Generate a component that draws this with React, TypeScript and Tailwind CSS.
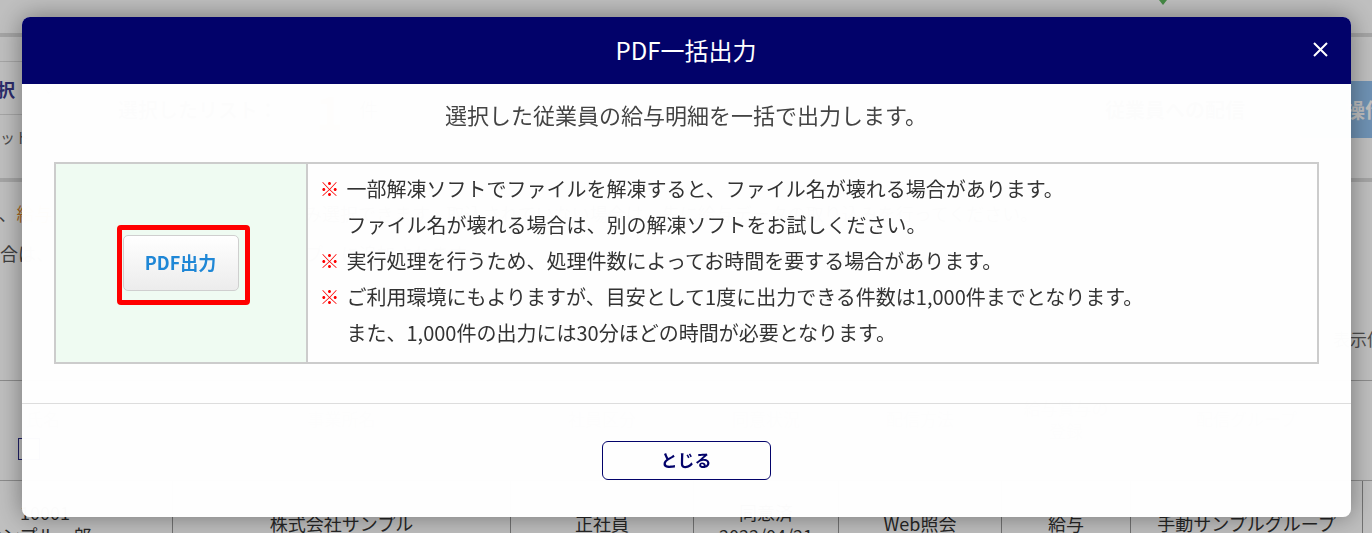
const cols = [
  { w: "w-[172px]", label: ["氏名"], left: true },
  { w: "w-[338px]", label: ["事業所名"] },
  { w: "w-[183px]", label: ["社員区分"] },
  { w: "w-[145px]", label: ["同意状況"] },
  { w: "w-[163px]", label: ["配信方法"] },
  { w: "w-[129px]", label: ["給与賞与の", "登録"] },
  { w: "w-[232px]", label: ["配信グループ"] },
];

const rowCells = [
  ["10001", "サンプル一郎"],
  ["株式会社サンプル"],
  ["正社員"],
  ["同意済", "2022/04/21"],
  ["Web照会"],
  ["給与"],
  ["手動サンプルグループ"],
];

function SortButtons({ active }: { active?: boolean }) {
  return (
    <div className="flex gap-[4px]">
      <span
        className={`w-[22px] h-[22px] border flex items-center justify-center ${
          active ? "border-[#2c2c8c]" : "border-[#dddddd]"
        }`}
      >
        <svg width="12" height="8" viewBox="0 0 12 8">
          <polyline points="1,7 6,2 11,7" fill="none" stroke="#cccccc" strokeWidth="1.6" />
        </svg>
      </span>
      <span className="w-[22px] h-[22px] border border-[#dddddd] flex items-center justify-center">
        <svg width="12" height="8" viewBox="0 0 12 8">
          <polyline points="1,1 6,6 11,1" fill="none" stroke="#cccccc" strokeWidth="1.6" />
        </svg>
      </span>
    </div>
  );
}

// page behind the dialog (dimmed by the overlay)
function BackgroundPage() {
  return (
    <div className="h-[533px] overflow-hidden bg-white text-[#333]">
      <div className="h-[33px] flex justify-end pr-[205px]">
        <div className="w-0 h-0 border-x-[4px] border-x-transparent border-t-[5px] border-t-[#5cb85c]" />
      </div>
      <div className="h-[4px] bg-[#dcdcdc]" />

      <div className="h-[141px] flex">
        <div className="w-[70px] shrink-0 flex flex-col">
          <div className="h-[25px] border-b border-[#dddddd]" />
          <div className="h-[53px] border-b border-[#dddddd] flex items-center gap-[26px] pt-[2px] text-[18px] font-bold text-[#3b3b8f] -ml-[3px]">
            <span>択</span>
            <svg width="16" height="9" viewBox="0 0 16 9">
              <polyline points="1,1 8,8 15,1" fill="none" stroke="#999" strokeWidth="1.6" />
            </svg>
          </div>
          <div className="pt-[14px] text-[15px] leading-[15px] text-[#666] whitespace-nowrap">ット</div>
        </div>
        <div className="flex-1 flex items-center pl-[48px] pt-[4px]">
          <span className="text-[20px] font-bold text-[#777]">選択したリスト：</span>
          <span className="ml-[38px] text-[46px] font-bold leading-none text-[#f0a040]">1</span>
          <span className="ml-[16px] text-[19px] text-[#777]">件</span>
          <div className="flex-1" />
          <div className="w-[186px] h-[54px] border border-[#cccccc] rounded flex items-center justify-center text-[20px] font-bold text-[#555]">
            従業員への配信
          </div>
          <div className="ml-[32px] mr-[-58px] w-[130px] h-[57px] rounded bg-[#94c3f0] flex items-center justify-center text-[20px] font-bold text-white">
            操作
          </div>
        </div>
      </div>
      <div className="h-[4px] bg-[#dcdcdc]" />

      <div className="h-[198px] flex flex-col pt-[11px] text-[18px] leading-[40px] text-[#555] whitespace-nowrap">
        <p className="-ml-[18px]">
          す、<span className="text-[#e08a2c]">給与</span>
          データを取込されている場合のみ選択できます。取込されていない場合は、先に給与データの取り込みを行ってください。
        </p>
        <p>合は、操作を選択すると「配信グループ」に追加されます。</p>
        <div className="flex-1 flex items-end justify-end pb-[30px]">
          <span className="text-[17px] leading-[22px] text-[#666] mr-[-29px]">表示件数</span>
        </div>
      </div>

      <div className="h-[100px] border-t border-[#bbbbbb] flex">
        {cols.map((c, i) => (
          <div
            key={i}
            className={`${c.w} shrink-0 flex flex-col justify-center gap-[8px] pt-[6px] ${
              c.left ? "items-start pl-[18px]" : "items-center border-l border-[#e6e6e6]"
            }`}
          >
            <div className={`text-[17px] leading-[23px] text-[#888] text-center ${c.left ? "pl-[8px]" : ""}`}>
              {c.label.map((l) => (
                <div key={l}>{l}</div>
              ))}
            </div>
            <SortButtons active={i === 0} />
          </div>
        ))}
      </div>

      <div className="h-[86px] border-t border-[#bbbbbb] flex text-[18px] leading-[23px] text-[#333]">
        {rowCells.map((cell, i) => (
          <div
            key={i}
            className={`${cols[i].w} shrink-0 flex flex-col justify-center whitespace-nowrap ${
              i === 0 ? "items-start pl-[20px]" : "items-center border-l border-[#999999]"
            }`}
          >
            {cell.map((t, j) => (
              <div key={j} className={i === 0 && j === 1 ? "-ml-[36px]" : ""}>
                {t}
              </div>
            ))}
          </div>
        ))}
        <div className="flex-1 border-l border-[#999999]" />
      </div>
    </div>
  );
}

const notes: string[][] = [
  [
    "一部解凍ソフトでファイルを解凍すると、ファイル名が壊れる場合があります。",
    "ファイル名が壊れる場合は、別の解凍ソフトをお試しください。",
  ],
  ["実行処理を行うため、処理件数によってお時間を要する場合があります。"],
  [
    "ご利用環境にもよりますが、目安として1度に出力できる件数は1,000件までとなります。",
    "また、1,000件の出力には30分ほどの時間が必要となります。",
  ],
];

function PdfBulkDialog() {
  return (
    <div className="fixed inset-0 bg-black/25 flex items-center justify-center">
      <div className="w-[1329px] h-[500px] rounded-lg bg-white/[0.985] shadow-[0_0_26px_rgba(0,0,0,0.4)] overflow-hidden flex flex-col">
        <div className="h-[67px] shrink-0 bg-[#02026a] relative flex items-center justify-center">
          <h2 className="text-white text-[24px] leading-none">PDF一括出力</h2>
          <button className="absolute right-[23px] top-[25px]">
            <svg width="15" height="15" viewBox="0 0 15 15">
              <path d="M1 1 L14 14 M14 1 L1 14" stroke="white" strokeWidth="2" />
            </svg>
          </button>
        </div>

        <div className="flex-1 flex flex-col">
          <p className="pt-[15px] text-center text-[22px] leading-[30px] text-[#444]">
            選択した従業員の給与明細を一括で出力します。
          </p>
          <div className="mx-[32px] mt-[33px] h-[202px] border-2 border-[#cccccc] flex">
            <div className="w-[252px] shrink-0 bg-[#effbf2] border-r-2 border-[#cccccc] flex items-center justify-center">
              <div className="relative">
                <button className="w-[116px] h-[56px] rounded-[5px] border border-[#cfcfcf] bg-gradient-to-b from-white to-[#ececec] text-[18px] font-bold text-[#1f87d6]">
                  PDF出力
                </button>
                <div className="absolute -left-[6px] -top-[10px] w-[133px] h-[80px] border-[5px] border-[#ff0000] rounded-[4px]" />
              </div>
            </div>
            <div className="flex-1 pl-[12px] pt-[7px] text-[20px] leading-[36px] text-[#333]">
              {notes.map((lines, i) => (
                <div key={i} className="flex">
                  <span className="w-[27px] shrink-0 text-[#ff0000]">※</span>
                  <div>
                    {lines.map((l) => (
                      <div key={l}>{l}</div>
                    ))}
                  </div>
                </div>
              ))}
            </div>
          </div>
        </div>

        <div className="h-[114px] shrink-0 border-t border-[#dddddd] flex items-center justify-center">
          <button className="w-[169px] h-[39px] rounded-[6px] border border-[#02026a] text-[17px] font-bold text-[#02026a]">
            とじる
          </button>
        </div>
      </div>
    </div>
  );
}

export default function App() {
  return (
    <div className="relative w-[1372px] h-[533px] overflow-hidden font-['Noto_Sans_CJK_JP','Noto_Sans',sans-serif]">
      <BackgroundPage />
      <PdfBulkDialog />
    </div>
  );
}
